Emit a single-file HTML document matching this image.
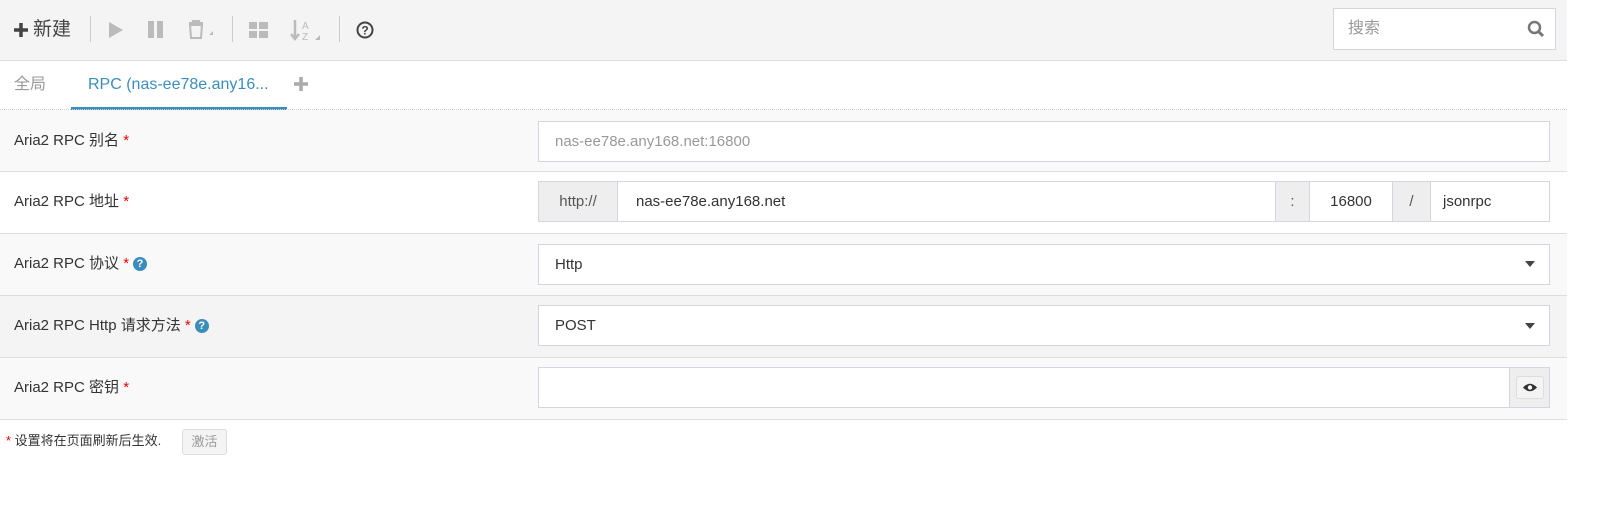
<!DOCTYPE html>
<html><head><meta charset="utf-8"><style>
*{box-sizing:border-box;margin:0;padding:0}
body{width:1615px;height:508px;background:#fff;font-family:"Liberation Sans","Noto Sans CJK SC",sans-serif;font-size:15px;color:#333;position:relative;overflow:hidden}
.a{position:absolute}
.tb{left:0;top:0;width:1567px;height:61px;background:#f4f4f4;border-bottom:1px solid #ddd}
.sep{width:1px;height:26px;top:16px;background:#ccc}
.row{left:0;width:1567px;height:62px;border-bottom:1px solid #ddd}
.lab{left:14px;font-size:15px;color:#333;line-height:20px}
.req{color:#e00}
.inp{background:#fff;border:1px solid #d2d6de;height:41px;line-height:39px;font-size:15px}
.q{display:inline-block;width:14px;height:14px;border-radius:50%;background:#3c8dbc;color:#fff;font-size:11px;font-weight:bold;text-align:center;line-height:14px;vertical-align:1px;margin-left:4px}
.add{background:#eee;color:#555;text-align:center}
.caret{width:0;height:0;border-left:5px solid transparent;border-right:5px solid transparent;border-top:6px solid #444}
</style></head><body>
<div class="a tb"></div>
<svg class="a" style="left:13px;top:22px" width="16" height="16"><path d="M8 1v14M1 8h14" stroke="#444" stroke-width="3.5"/></svg>
<div class="a" style="left:33px;top:17px;font-size:19px;color:#444;line-height:26px">新建</div>
<div class="a sep" style="left:90px"></div>
<svg class="a" style="left:107px;top:21px" width="18" height="18"><path d="M2 1L16 9L2 17Z" fill="#bbb"/></svg>
<div class="a" style="left:148px;top:21px;width:6px;height:17px;background:#bbb"></div>
<div class="a" style="left:157px;top:21px;width:6px;height:17px;background:#bbb"></div>
<svg class="a" style="left:187px;top:20px" width="28" height="22"><path d="M2 3h14M6 3V1h6v2M3 5h12l-1 13H4Z" fill="none" stroke="#bbb" stroke-width="2"/><path d="M22 15l4 0 0-4z" fill="#bbb"/></svg>
<div class="a sep" style="left:232px"></div>
<div class="a" style="left:249px;top:22px;width:8px;height:7px;background:#bbb"></div>
<div class="a" style="left:259px;top:22px;width:9px;height:7px;background:#bbb"></div>
<div class="a" style="left:249px;top:31px;width:8px;height:7px;background:#bbb"></div>
<div class="a" style="left:259px;top:31px;width:9px;height:7px;background:#bbb"></div>
<svg class="a" style="left:290px;top:18px" width="34" height="26"><path d="M5 2v18M1 16l4 5 4-5" fill="none" stroke="#bbb" stroke-width="2.5"/><text x="12" y="11" font-size="10" fill="#bbb" font-family="Liberation Sans">A</text><text x="12" y="22" font-size="10" fill="#bbb" font-family="Liberation Sans">Z</text><path d="M25 22h5v-5z" fill="#bbb"/></svg>
<div class="a sep" style="left:339px"></div>
<svg class="a" style="left:356px;top:21px" width="18" height="18"><circle cx="9" cy="9" r="7.5" fill="none" stroke="#444" stroke-width="2"/><text x="9" y="13.5" font-size="12" font-weight="bold" text-anchor="middle" fill="#444" font-family="Liberation Sans">?</text></svg>
<div class="a" style="left:1333px;top:8px;width:223px;height:42px;background:#fff;border:1px solid #d2d6de"></div>
<div class="a" style="left:1348px;top:19px;font-size:16px;color:#999;line-height:20px">搜索</div>
<svg class="a" style="left:1527px;top:20px" width="18" height="18"><circle cx="7.5" cy="7.5" r="5.5" fill="none" stroke="#777" stroke-width="2.5"/><path d="M11.5 11.5l4.5 4.5" stroke="#777" stroke-width="3"/></svg>

<div class="a" style="left:14px;top:75px;font-size:16px;color:#999;line-height:20px">全局</div>
<div class="a" style="left:88px;top:75px;font-size:16px;color:#3c8dbc;line-height:20px">RPC (nas-ee78e.any16...</div>
<div class="a" style="left:71px;top:107px;width:216px;height:3px;background:#3c8dbc"></div>
<svg class="a" style="left:294px;top:77px" width="14" height="14"><path d="M7 0v14M0 7h14" stroke="#aaa" stroke-width="3.5"/></svg>
<div class="a" style="left:0;top:109px;width:1567px;border-top:1px dotted #ccc"></div>

<div class="a row" style="top:110px;background:#f9f9f9"></div>
<div class="a row" style="top:172px;background:#fff"></div>
<div class="a row" style="top:234px;background:#f9f9f9"></div>
<div class="a row" style="top:296px;background:#f4f4f4"></div>
<div class="a row" style="top:358px;background:#f9f9f9"></div>

<div class="a lab" style="top:131px">Aria2 RPC 别名 <span class="req">*</span></div>
<div class="a lab" style="top:192px">Aria2 RPC 地址 <span class="req">*</span></div>
<div class="a lab" style="top:254px">Aria2 RPC 协议 <span class="req">*</span><span class="q">?</span></div>
<div class="a lab" style="top:316px">Aria2 RPC Http 请求方法 <span class="req">*</span><span class="q">?</span></div>
<div class="a lab" style="top:378px">Aria2 RPC 密钥 <span class="req">*</span></div>

<div class="a inp" style="left:538px;top:121px;width:1012px;padding-left:16px;color:#999">nas-ee78e.any168.net:16800</div>

<div class="a inp add" style="left:538px;top:181px;width:80px">http://</div>
<div class="a inp" style="left:617px;top:181px;width:659px;padding-left:18px;color:#333">nas-ee78e.any168.net</div>
<div class="a inp add" style="left:1275px;top:181px;width:35px">:</div>
<div class="a inp" style="left:1309px;top:181px;width:84px;text-align:center">16800</div>
<div class="a inp add" style="left:1392px;top:181px;width:39px">/</div>
<div class="a inp" style="left:1430px;top:181px;width:120px;padding-left:12px">jsonrpc</div>

<div class="a inp" style="left:538px;top:244px;width:1012px;padding-left:16px">Http</div>
<div class="a caret" style="left:1525px;top:261px"></div>
<div class="a inp" style="left:538px;top:305px;width:1012px;padding-left:16px">POST</div>
<div class="a caret" style="left:1525px;top:323px"></div>

<div class="a inp" style="left:538px;top:367px;width:1012px"></div>
<div class="a" style="left:1509px;top:368px;width:40px;height:39px;background:#eee;border-left:1px solid #d2d6de"></div>
<div class="a" style="left:1516px;top:376px;width:28px;height:23px;background:#f4f4f4;border:1px solid #ddd;border-radius:3px"></div>
<svg class="a" style="left:1522px;top:382px" width="16" height="11"><path d="M1 5.5Q8 -2 15 5.5Q8 13 1 5.5Z" fill="#333"/><circle cx="8" cy="5.5" r="2.2" fill="#fff"/></svg>

<div class="a" style="left:6px;top:432px;font-size:13px;color:#333;line-height:18px"><span class="req">*</span> 设置将在页面刷新后生效.</div>
<div class="a" style="left:182px;top:429px;width:45px;height:26px;border:1px solid #ddd;border-radius:3px;background:#f4f4f4;color:#999;font-size:13px;text-align:center;line-height:24px">激活</div>
</body></html>
